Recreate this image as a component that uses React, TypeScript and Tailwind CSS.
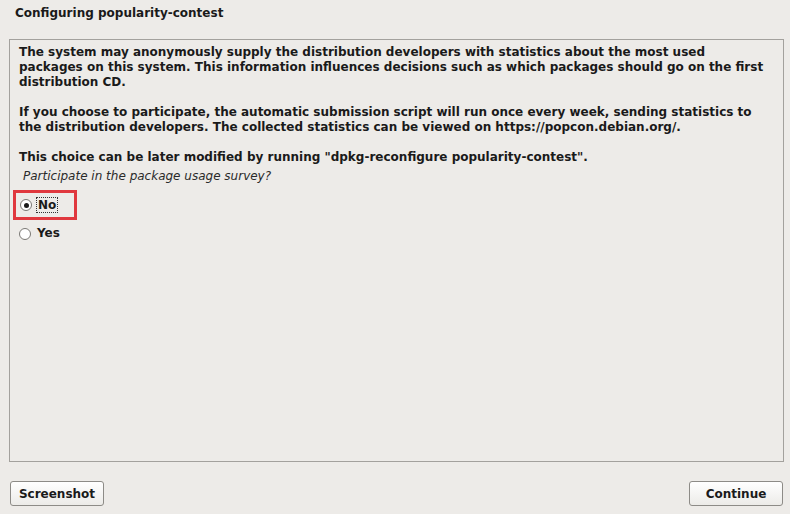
export default function App() {
  return (
    <div
      className="w-[790px] h-[514px] bg-[#edebe8] text-[#1a1a1a] flex flex-col overflow-hidden"
      style={{ fontFamily: '"DejaVu Sans", Verdana, sans-serif' }}
    >
      <div className="h-[28px] pl-[15px] pt-[6px] text-[12px] font-bold leading-[15px]">
        Configuring popularity-contest
      </div>
      <div className="ml-[9px] mr-[6px] mt-[11px] h-[423px] border border-[#a3a19d] pl-[9px] pr-2 pt-[5px] text-[12px] leading-[15px]">
        <p className="font-bold">
          The system may anonymously supply the distribution developers with statistics about the most used
          <br />
          packages on this system. This information influences decisions such as which packages should go on the first
          <br />
          distribution CD.
        </p>
        <p className="font-bold mt-[15px]">
          If you choose to participate, the automatic submission script will run once every week, sending statistics to
          <br />
          the distribution developers. The collected statistics can be viewed on https://popcon.debian.org/.
        </p>
        <p className="font-bold mt-[15px]">
          This choice can be later modified by running "dpkg-reconfigure popularity-contest".
        </p>
        <p className="italic mt-[4px] ml-[4px] text-[#2a2a2a]">Participate in the package usage survey?</p>
        <div className="mt-[6px] -ml-[6px] w-[64px] h-[30px] border-[3px] border-[#e0383e] flex items-center pl-[4px] gap-[4px]">
          <Radio checked />
          <span className="font-bold border border-dotted border-[#333] px-[1px] leading-[14px]">No</span>
        </div>
        <div className="mt-[6px] flex items-center gap-[6px] ml-[0px]">
          <Radio />
          <span className="font-bold">Yes</span>
        </div>
      </div>
      <div className="flex justify-between ml-[10px] mr-[7px] mt-[19px]">
        <Button label="Screenshot" />
        <Button label="Continue" />
      </div>
    </div>
  );
}

function Radio({ checked = false }: { checked?: boolean }) {
  return (
    <span className="w-[12px] h-[12px] rounded-full border border-[#7a7874] bg-white flex items-center justify-center">
      {checked && <span className="w-[5px] h-[5px] rounded-full bg-[#1a1a1a]" />}
    </span>
  );
}

function Button({ label }: { label: string }) {
  return (
    <div className="w-[94px] h-[25px] rounded-[3px] border border-[#8d8b87] bg-gradient-to-b from-white to-[#ecebe8] flex items-center justify-center text-[12px] font-bold">
      {label}
    </div>
  );
}
